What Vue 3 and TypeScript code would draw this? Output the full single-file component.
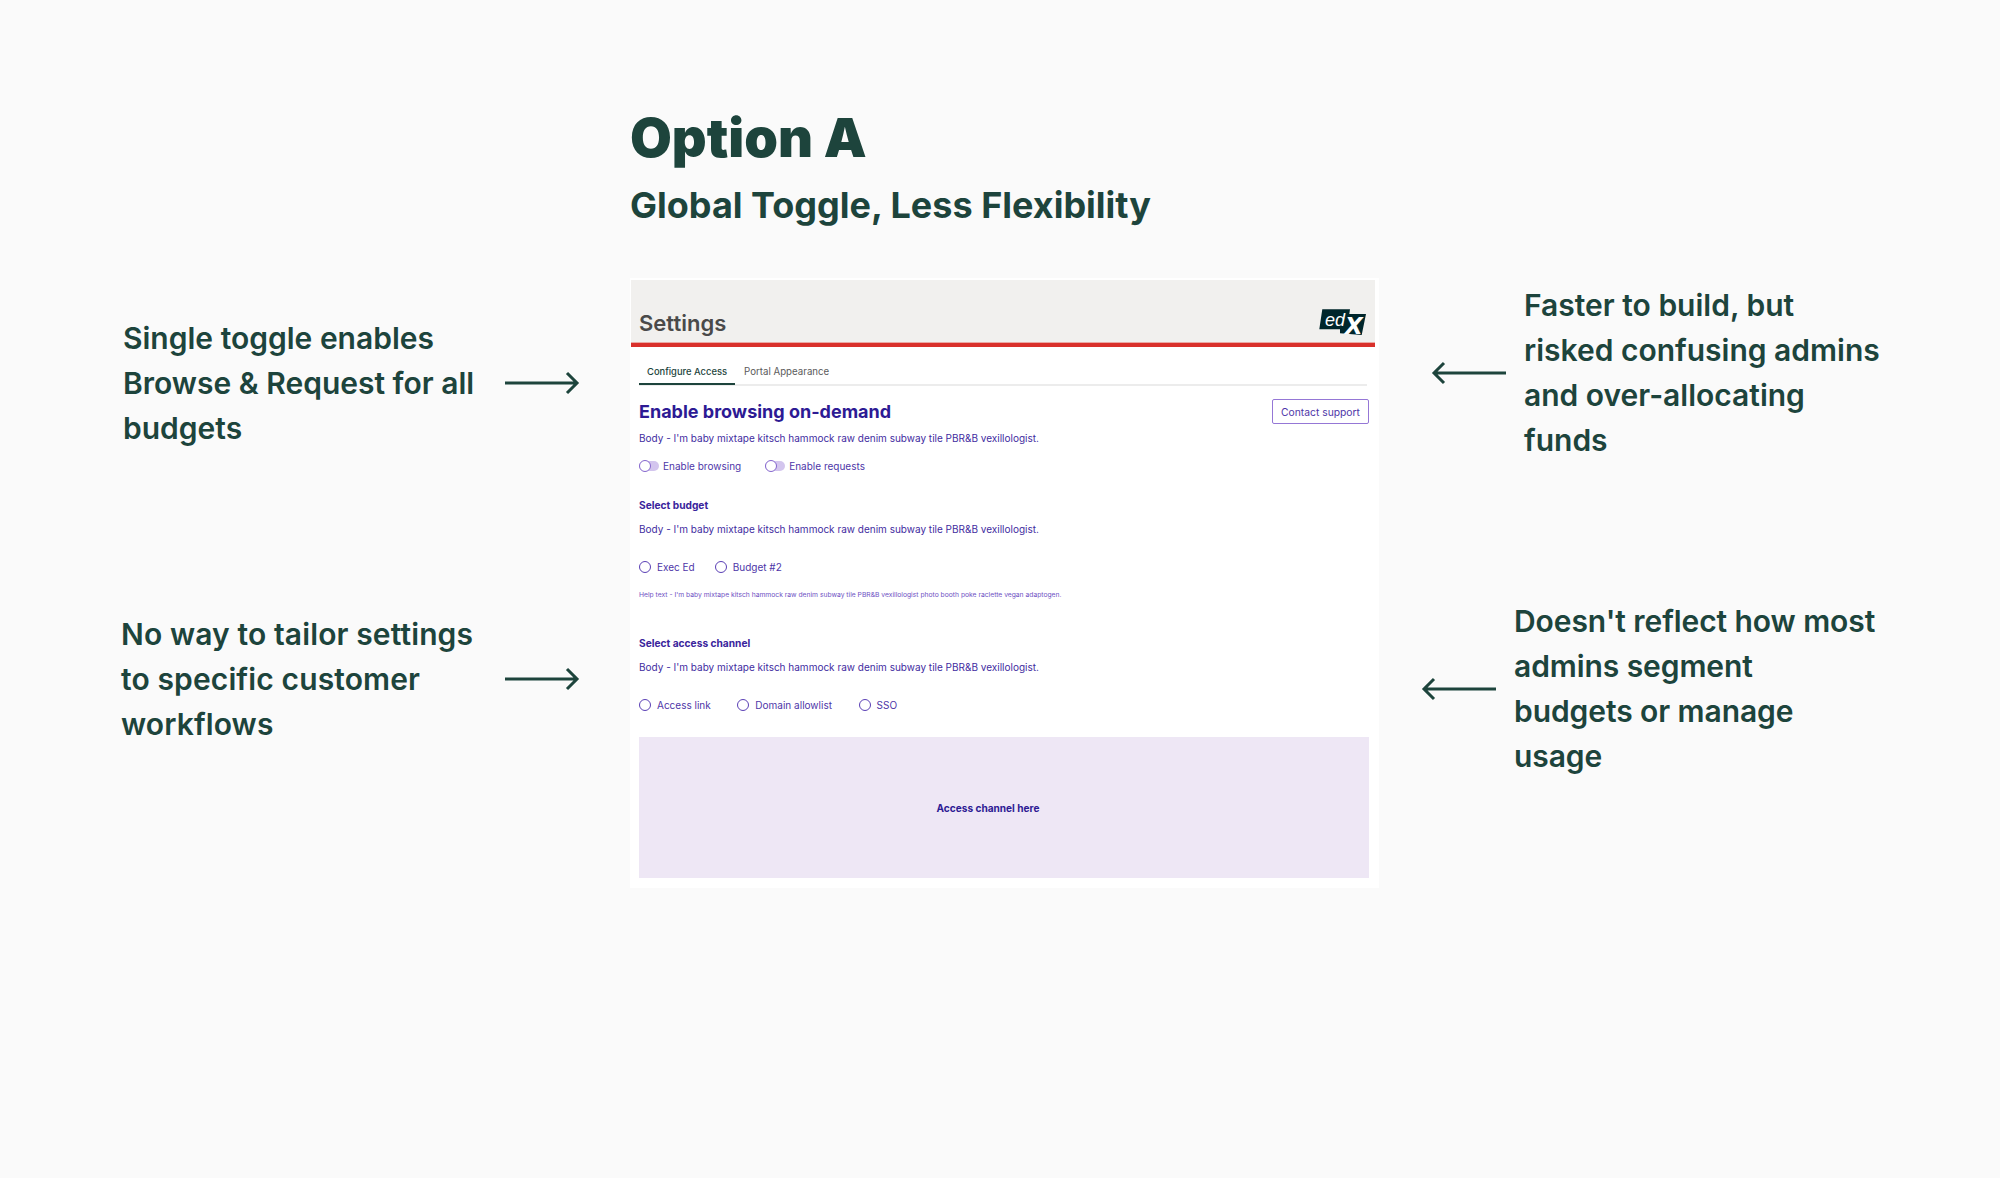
<script setup lang="ts">
interface Note {
  lines: string[]
  cls: string
}

const leftNotes: Note[] = [
  { lines: ['Single toggle enables', 'Browse & Request for all', 'budgets'], cls: 'left-a' },
  { lines: ['No way to tailor settings', 'to specific customer', 'workflows'], cls: 'left-b' },
]
const rightNotes: Note[] = [
  { lines: ['Faster to build, but', 'risked confusing admins', 'and over-allocating', 'funds'], cls: 'right-a' },
  { lines: ["Doesn't reflect how most", 'admins segment', 'budgets or manage', 'usage'], cls: 'right-b' },
]
const bodyText = "Body - I'm baby mixtape kitsch hammock raw denim subway tile PBR&B vexillologist."
</script>

<template>
  <div class="page">
    <div class="side side-left">
      <div v-for="n in leftNotes" :key="n.cls" class="note" :class="n.cls">
        <p class="note-text">
          <span v-for="l in n.lines" :key="l" class="line">{{ l }}</span>
        </p>
        <svg class="arrow" width="78" height="24" viewBox="0 0 78 24" fill="none">
          <path d="M0 12H72M62 2L72 12L62 22" stroke="#1d443c" stroke-width="3" />
        </svg>
      </div>
    </div>

    <div class="center">
      <h1 class="title">Option A</h1>
      <h2 class="subtitle">Global Toggle, Less Flexibility</h2>

      <div class="card">
        <div class="header">
          <span class="header-title">Settings</span>
          <svg class="logo" width="48" height="28" viewBox="0 0 48 28">
            <path d="M3.3 0.3H31L30.3 5H47L42.7 26L21 24.3V20.3H0.3Z" fill="#00262b" />
            <text x="6" y="17" class="logo-ed">ed</text>
            <text x="26" y="25" class="logo-x">X</text>
          </svg>
        </div>
        <div class="content">
          <div class="tabs">
            <span class="tab tab-active">Configure Access</span>
            <span class="tab tab-plain">Portal Appearance</span>
          </div>

          <div class="head-row">
            <span class="heading">Enable browsing on-demand</span>
            <button class="support">Contact support</button>
          </div>
          <p class="body body-first">{{ bodyText }}</p>
          <div class="toggles">
            <label class="toggle"><i class="switch"></i>Enable browsing</label>
            <label class="toggle"><i class="switch"></i>Enable requests</label>
          </div>

          <h3 class="label label-budget">Select budget</h3>
          <p class="body">{{ bodyText }}</p>
          <div class="radios radios-budget">
            <label class="radio"><i class="dot"></i>Exec Ed</label>
            <label class="radio"><i class="dot"></i>Budget #2</label>
          </div>
          <p class="help">Help text - I'm baby mixtape kitsch hammock raw denim subway tile PBR&amp;B vexillologist photo booth poke raclette vegan adaptogen.</p>

          <h3 class="label label-channel">Select access channel</h3>
          <p class="body">{{ bodyText }}</p>
          <div class="radios radios-channel">
            <label class="radio"><i class="dot"></i>Access link</label>
            <label class="radio"><i class="dot"></i>Domain allowlist</label>
            <label class="radio"><i class="dot"></i>SSO</label>
          </div>

          <div class="channel-box">Access channel here</div>
        </div>
      </div>
    </div>

    <div class="side side-right">
      <div v-for="n in rightNotes" :key="n.cls" class="note" :class="n.cls">
        <svg class="arrow" width="76" height="24" viewBox="0 0 76 24" fill="none">
          <path d="M75 12H3M13 2L3 12L13 22" stroke="#1d443c" stroke-width="3" />
        </svg>
        <p class="note-text">
          <span v-for="l in n.lines" :key="l" class="line">{{ l }}</span>
        </p>
      </div>
    </div>
  </div>
</template>

<style>
html, body {
  margin: 0;
  background: #fafafa;
}
</style>

<style scoped>
.page {
  display: grid;
  grid-template-columns: 630px 750px 1fr;
  width: 2000px;
  height: 1178px;
  overflow: hidden;
  background: #fafafa;
  font-family: Inter, "Liberation Sans", sans-serif;
  color: #1d443c;
}

.side {
  display: flex;
  flex-direction: column;
}

.note {
  display: flex;
  align-items: center;
}

.note-text {
  margin: 1px 0 0;
  font-size: 30px;
  font-weight: 600;
  line-height: 45px;
  white-space: nowrap;
}

.line {
  display: block;
}

.side-left .note-text {
  width: 382px;
}

.left-a {
  margin-top: 315px;
  padding-left: 123px;
}

.left-b {
  margin-top: 160px;
  padding-left: 121px;
}

.side-left .left-b .note-text {
  width: 384px;
  letter-spacing: 0.12px;
}

.right-a {
  margin-top: 282px;
  padding-left: 51px;
}

.right-b {
  margin-top: 135px;
  padding-left: 41px;
}

.side-right .note-text {
  margin-left: 17px;
}

.side-right .right-b .note-text {
  letter-spacing: -0.08px;
}

.center {
  padding-top: 104px;
}

.title {
  margin: 0;
  font-size: 54px;
  font-weight: 900;
  line-height: 68px;
}

.subtitle {
  margin: 11px 0 0;
  font-size: 36px;
  font-weight: 700;
  line-height: 44px;
}

.card {
  margin-top: 51px;
  width: 749px;
  height: 610px;
  background: #fff;
  box-sizing: border-box;
  padding: 2px 4px 0 1px;
}

.header {
  display: flex;
  justify-content: space-between;
  align-items: flex-end;
  height: 63px;
  padding: 0 8px;
  background: #f1f0ee;
  border-bottom: 4px solid #d9302b;
  box-shadow: inset 0 -1px 0 #eaa9a4;
  box-sizing: content-box;
}

.header-title {
  font-size: 22px;
  font-weight: 600;
  line-height: 27px;
  color: #4a4a4a;
  margin-bottom: 6px;
}

.logo {
  margin-bottom: 6px;
  overflow: visible;
}

.logo-ed {
  font-family: "Liberation Sans", sans-serif;
  font-style: italic;
  font-size: 18px;
  fill: #fff;
}

.logo-x {
  font-family: "DejaVu Sans", sans-serif;
  font-style: italic;
  font-weight: 700;
  font-size: 23px;
  fill: #fff;
}

.content {
  padding: 15px 6px 0 8px;
  color: #2d1a94;
}

.tabs {
  display: flex;
  height: 22px;
  border-bottom: 2px solid #ececec;
  margin-right: 2px;
  font-size: 9.4px;
}

.tab {
  padding: 0 8px;
  height: 21px;
  line-height: 20px;
}

.tab-plain {
  margin-left: 1px;
  color: #5b5b5b;
  font-size: 9.7px;
}

.tab-active {
  color: #1d443c;
  font-weight: 500;
  border-bottom: 2px solid #1d443c;
}

.head-row {
  display: flex;
  justify-content: space-between;
  align-items: center;
  height: 25px;
  margin-top: 13px;
}

.heading {
  font-size: 18px;
  font-weight: 700;
  color: #2d1a94;
}

.support {
  width: 97px;
  height: 25px;
  padding: 0;
  background: #fff;
  border: 1px solid #9577d6;
  border-radius: 2px;
  color: #4e36a8;
  font-family: inherit;
  font-size: 10.3px;
}

.body {
  margin: 0;
  font-size: 10px;
  line-height: 16px;
  color: #3f2c9f;
  white-space: nowrap;
}

.body-first {
  margin-top: 6px;
}

.toggles {
  display: flex;
  gap: 24px;
  margin-top: 12px;
  height: 16px;
}

.toggle {
  display: flex;
  align-items: center;
  gap: 4px;
  font-size: 10px;
  color: #4e36a8;
}

.switch {
  position: relative;
  display: block;
  width: 20px;
  height: 10px;
  border-radius: 5px;
  background: #d3c5ee;
}

.switch::before {
  content: '';
  position: absolute;
  left: 0;
  top: -1px;
  width: 12px;
  height: 12px;
  border: 1.2px solid #8465cd;
  border-radius: 50%;
  background: #fff;
  box-sizing: border-box;
}

.label {
  margin: 0 0 8px;
  font-size: 10.2px;
  font-weight: 700;
  line-height: 16px;
  color: #3a249c;
}

.label-budget {
  margin-top: 23px;
}

.label-channel {
  margin-top: 35px;
}

.radios {
  display: flex;
  height: 16px;
  margin-top: 22px;
  font-size: 10px;
  color: #4e36a8;
}

.radio {
  display: flex;
  align-items: center;
  gap: 6px;
}

.dot {
  display: block;
  width: 12px;
  height: 12px;
  border: 1.5px solid #5a3fb5;
  border-radius: 50%;
  box-sizing: border-box;
}

.radios-budget {
  gap: 20px;
}

.radios-channel {
  gap: 26.6px;
}

.help {
  margin: 15px 0 0;
  font-size: 6.74px;
  line-height: 10px;
  color: #6f52c4;
  white-space: nowrap;
}

.channel-box {
  display: flex;
  align-items: center;
  justify-content: center;
  height: 141px;
  margin-top: 24px;
  padding-right: 32px;
  box-sizing: border-box;
  background: #eee7f5;
  font-size: 10.1px;
  font-weight: 700;
  color: #2d1a94;
}
</style>
